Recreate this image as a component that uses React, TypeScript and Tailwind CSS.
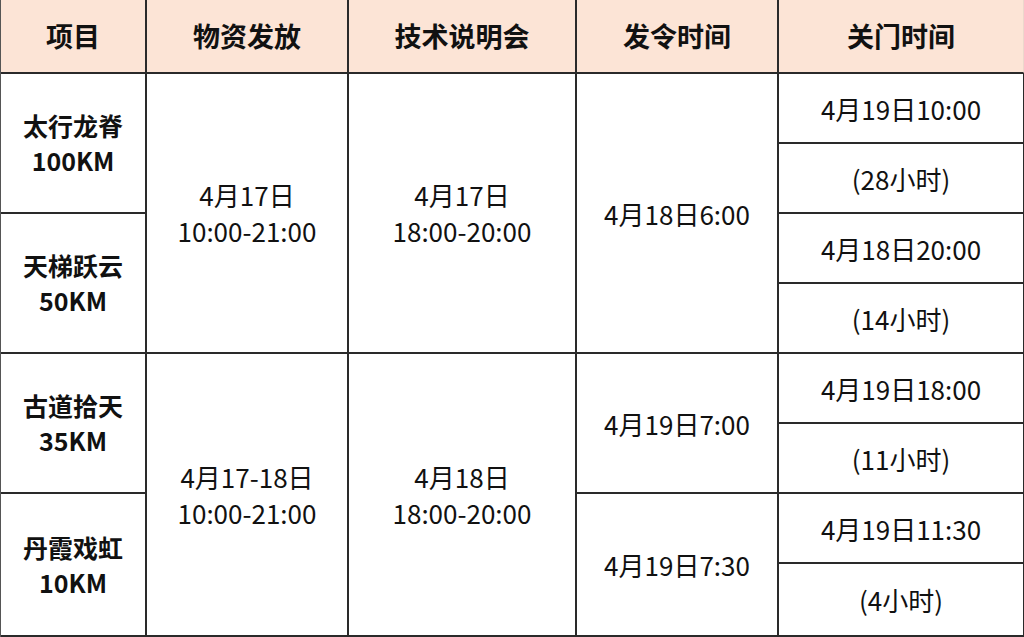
const font = {
  fontFamily: '"Noto Sans CJK SC", "Noto Sans", sans-serif',
};

const headers = ["项目", "物资发放", "技术说明会", "发令时间", "关门时间"];

const line = "border-[#2a2a2a]";

function Cell({
  className = "",
  children,
}: {
  className?: string;
  children?: React.ReactNode;
}) {
  return (
    <div
      className={`flex flex-col items-center justify-center text-center border-r-2 border-b-2 ${line} ${className}`}
    >
      {children}
    </div>
  );
}

export default function App() {
  return (
    <div
      className="w-[1024px] h-[637px] bg-white text-[#111] overflow-hidden"
      style={font}
    >
      <div className="grid h-full grid-cols-[146px_202px_228px_202px_246px] grid-rows-[74px_repeat(7,70px)_73px] border-l border-[#555]">
        {headers.map((h, i) => (
          <Cell
            key={h}
            className={`bg-[#fce4d6] text-[27px] font-bold ${
              i === 4 ? "border-r-[#ecd8cc]" : ""
            }`}
          >
            {h}
          </Cell>
        ))}

        {/* 项目 */}
        <Cell className="row-start-2 row-span-2 col-start-1 text-[25px] font-bold leading-[35px]">
          <span>太行龙脊</span>
          <span>100KM</span>
        </Cell>
        <Cell className="row-start-4 row-span-2 col-start-1 text-[25px] font-bold leading-[35px]">
          <span>天梯跃云</span>
          <span>50KM</span>
        </Cell>
        <Cell className="row-start-6 row-span-2 col-start-1 text-[25px] font-bold leading-[35px]">
          <span>古道拾天</span>
          <span>35KM</span>
        </Cell>
        <Cell className="row-start-8 row-span-2 col-start-1 text-[25px] font-bold leading-[35px]">
          <span>丹霞戏虹</span>
          <span>10KM</span>
        </Cell>

        {/* 物资发放 */}
        <Cell className="row-start-2 row-span-4 col-start-2 text-[26px] leading-[36px]">
          <span>4月17日</span>
          <span>10:00-21:00</span>
        </Cell>
        <Cell className="row-start-6 row-span-4 col-start-2 text-[26px] leading-[36px]">
          <span>4月17-18日</span>
          <span>10:00-21:00</span>
        </Cell>

        {/* 技术说明会 */}
        <Cell className="row-start-2 row-span-4 col-start-3 text-[26px] leading-[36px]">
          <span>4月17日</span>
          <span>18:00-20:00</span>
        </Cell>
        <Cell className="row-start-6 row-span-4 col-start-3 text-[26px] leading-[36px]">
          <span>4月18日</span>
          <span>18:00-20:00</span>
        </Cell>

        {/* 发令时间 */}
        <Cell className="row-start-2 row-span-4 col-start-4 text-[26px]">
          4月18日6:00
        </Cell>
        <Cell className="row-start-6 row-span-2 col-start-4 text-[26px]">
          4月19日7:00
        </Cell>
        <Cell className="row-start-8 row-span-2 col-start-4 text-[26px]">
          4月19日7:30
        </Cell>

        {/* 关门时间 */}
        {[
          "4月19日10:00",
          "(28小时)",
          "4月18日20:00",
          "(14小时)",
          "4月19日18:00",
          "(11小时)",
          "4月19日11:30",
          "(4小时)",
        ].map((t) => (
          <Cell key={t} className="col-start-5 text-[26px]">
            {t}
          </Cell>
        ))}
      </div>
    </div>
  );
}
